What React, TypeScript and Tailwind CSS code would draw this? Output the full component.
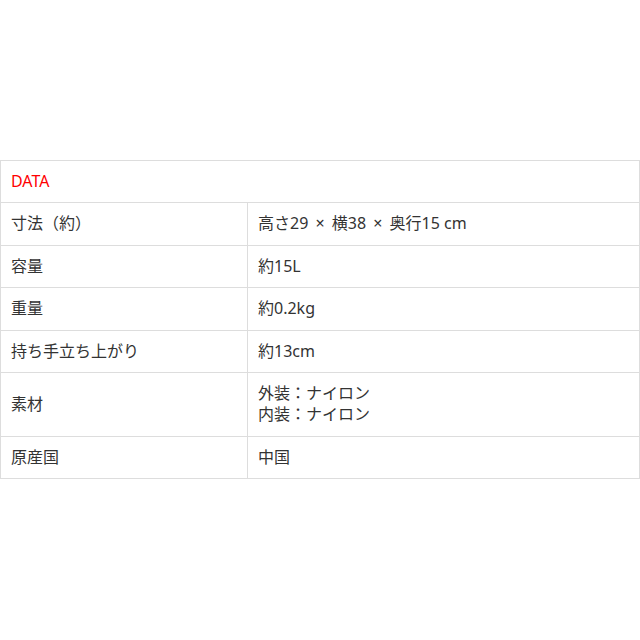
import React from "react";

const X = () => <span className="mx-[3px]">×</span>;

const rows: [string, React.ReactNode[]][] = [
  [
    "寸法（約）",
    [
      <>
        高さ29 <X /> 横38 <X /> 奥行15 cm
      </>,
    ],
  ],
  ["容量", ["約15L"]],
  ["重量", ["約0.2kg"]],
  ["持ち手立ち上がり", ["約13cm"]],
  ["素材", ["外装：ナイロン", "内装：ナイロン"]],
  ["原産国", ["中国"]],
];

export default function App() {
  return (
    <div
      className="w-[640px] h-[640px] bg-white pt-[160px] text-[#333] text-[16px] leading-[21.4px]"
      style={{ fontFamily: '"Noto Sans", "Noto Sans CJK JP", sans-serif' }}
    >
      <table className="w-full border-collapse">
        <tbody>
          <tr>
            <td colSpan={2} className="border border-[#ddd] px-[10px] py-[10px] text-[#ff0000]">
              DATA
            </td>
          </tr>
          {rows.map(([k, v]) => (
            <tr key={k}>
              <td className="w-[247px] border border-[#ddd] px-[10px] py-[10px] align-middle">{k}</td>
              <td className="border border-[#ddd] px-[10px] py-[10px] align-middle">
                {v.map((l, i) => (
                  <div key={i}>{l}</div>
                ))}
              </td>
            </tr>
          ))}
        </tbody>
      </table>
    </div>
  );
}
